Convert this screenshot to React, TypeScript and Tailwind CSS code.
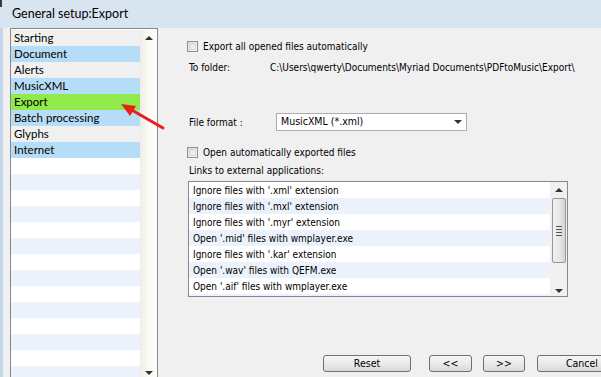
import React from "react";

const tahoma = "[font-family:'DejaVu_Sans_Condensed','DejaVu_Sans',sans-serif]";
const segoe = "[font-family:Lato,'Noto_Sans',sans-serif]";

const sections = ["Starting", "Document", "Alerts", "MusicXML", "Export", "Batch processing", "Glyphs", "Internet"];

const links = [
    "Ignore files with '.xml' extension",
    "Ignore files with '.mxl' extension",
    "Ignore files with '.myr' extension",
    "Open '.mid' files with wmplayer.exe",
    "Ignore files with '.kar' extension",
    "Open '.wav' files with QEFM.exe",
    "Open '.aif' files with wmplayer.exe",
    "Open '.aac' files with TimeStretch.exe",
];

function sectionBg(i: number, label?: string) {
    if (label === "Export") return "bg-[#8fea4a]";
    if (label) return i % 2 === 1 ? "bg-[#b5ddf7]" : "bg-[#f0f0f0]";
    return i % 2 === 1 ? "bg-[#ebf2fc]" : "bg-white";
}

function Checkbox() {
    return (
        <div className="w-[11px] h-[11px] shrink-0 border border-[#8e8f8f] bg-gradient-to-br from-[#dcdcdc] to-[#fbfbfb] p-[1px]">
            <div className="w-full h-full border border-[#d6d6d6] bg-gradient-to-br from-[#e2e2e2] to-[#f6f6f6]" />
        </div>
    );
}

function Arrow({ down }: { down?: boolean }) {
    return (
        <div
            className={
                down
                    ? "w-0 h-0 border-l-[4px] border-r-[4px] border-t-[4px] border-l-transparent border-r-transparent border-t-[#333]"
                    : "w-0 h-0 border-l-[4px] border-r-[4px] border-b-[4px] border-l-transparent border-r-transparent border-b-[#333]"
            }
        />
    );
}

function Button({ label, w }: { label: string; w: string }) {
    return (
        <div
            className={`${w} h-[17px] shrink-0 flex items-center justify-center rounded-[3px] border border-[#707070] bg-gradient-to-b from-[#f4f4f4] via-[#ebebeb] to-[#d9d9d9] text-[10.5px] text-black ${tahoma}`}
        >
            {label}
        </div>
    );
}

export default function App() {
    const rows = Array.from({ length: 22 }, (_, i) => sections[i]);

    return (
        <div className="relative w-[601px] h-[377px] overflow-hidden bg-[#f0f0f0] flex flex-col">
            {/* Title bar */}
            <div className="relative h-[28px] shrink-0 bg-[#d9e4f1] flex items-center pl-[12px]">
                <div className="absolute left-0 top-0 w-[2px] h-[7px] bg-[#3a3a3a]" />
                <span className={`text-[12.5px] text-black ${segoe}`}>General setup:Export</span>
            </div>

            <div className="flex flex-1 min-h-0">
                {/* Window frame strip */}
                <div className="w-[3px] bg-[#c3d6ec] shrink-0" />
                <div className="w-[7px] shrink-0" />

                {/* Sections list */}
                <div className="w-[148px] shrink-0 border border-b-0 border-[#828790] bg-white pt-[1px] flex">
                    <div className="w-[129px] flex flex-col">
                        {rows.map((label, i) => (
                            <div
                                key={i}
                                className={`h-[16px] shrink-0 flex items-center pl-[3px] text-[11.5px] text-black ${segoe} ${sectionBg(i, label)}`}
                            >
                                {label}
                            </div>
                        ))}
                    </div>
                    <div className="w-[17px] bg-gradient-to-r from-[#eeede8] via-[#fbfaf6] to-[#fdfdfb] flex flex-col items-center justify-between pt-[6px] pb-[2px]">
                        <Arrow />
                        <Arrow down />
                    </div>
                </div>

                {/* Export settings */}
                <div className={`flex-1 flex flex-col pl-[29px] text-[10px] text-black ${tahoma}`}>
                    <div className="mt-[10px] h-[16px] flex items-center gap-[5px]">
                        <Checkbox />
                        <span>Export all opened files automatically</span>
                    </div>
                    <div className="mt-[5px] h-[16px] flex items-center pl-[2px]">
                        <span className="w-[81px]">To folder:</span>
                        <span className="whitespace-nowrap">C:\Users\qwerty\Documents\Myriad Documents\PDFtoMusic\Export\</span>
                    </div>
                    <div className="mt-[38px] h-[18px] flex items-center pl-[2px]">
                        <span className="w-[87px]">File format :</span>
                        <div className="w-[191px] h-[18px] bg-white border border-[#abadb3] flex items-center justify-between pl-[4px] pr-[4px] text-[10.5px]">
                            <span>MusicXML (*.xml)</span>
                            <Arrow down />
                        </div>
                    </div>
                    <div className="mt-[13px] h-[16px] flex items-center gap-[5px]">
                        <Checkbox />
                        <span>Open automatically exported files</span>
                    </div>
                    <div className="mt-[2px] h-[16px] flex items-center pl-[2px]">
                        <span>Links to external applications:</span>
                    </div>

                    {/* Links list */}
                    <div className="mt-[3px] ml-[1px] w-[380px] h-[116px] border border-[#828790] bg-white flex overflow-hidden">
                        <div className="flex-1 flex flex-col">
                            {links.map((l, i) => (
                                <div
                                    key={i}
                                    className={`h-[16px] shrink-0 flex items-center pl-[4px] text-[10px] ${i % 2 === 1 ? "bg-[#ebf2fc]" : "bg-white"}`}
                                >
                                    {l}
                                </div>
                            ))}
                        </div>
                        <div className="w-[17px] bg-[#f0f0f0] flex flex-col items-center pt-[6px] pb-[3px]">
                            <Arrow />
                            <div className="mt-[6px] w-[14px] h-[65px] rounded-[2px] border border-[#979797] bg-gradient-to-r from-[#f0f0f0] via-[#e8e8e8] to-[#d4d4d4] flex flex-col items-center justify-center gap-[2px]">
                                <div className="w-[6px] h-[1px] bg-[#555]" />
                                <div className="w-[6px] h-[1px] bg-[#555]" />
                                <div className="w-[6px] h-[1px] bg-[#555]" />
                                <div className="w-[6px] h-[1px] bg-[#555]" />
                            </div>
                            <div className="flex-1" />
                            <Arrow down />
                        </div>
                    </div>

                    {/* Buttons */}
                    <div className="mt-[58px] flex pl-[136px]">
                        <Button label="Reset" w="w-[88px]" />
                        <div className="w-[18px] shrink-0" />
                        <Button label="<<" w="w-[43px]" />
                        <div className="w-[11px] shrink-0" />
                        <Button label=">>" w="w-[42px]" />
                        <div className="w-[12px] shrink-0" />
                        <Button label="Cancel" w="w-[90px]" />
                    </div>
                </div>
            </div>

            {/* Red arrow annotation */}
            <svg className="absolute left-0 top-0 pointer-events-none" width="601" height="377">
                <line x1="163" y1="128" x2="130" y2="109" stroke="#e8201a" strokeWidth="3" strokeLinecap="round" />
                <polygon points="121,104 136,106 130,116" fill="#e8201a" />
            </svg>
        </div>
    );
}
